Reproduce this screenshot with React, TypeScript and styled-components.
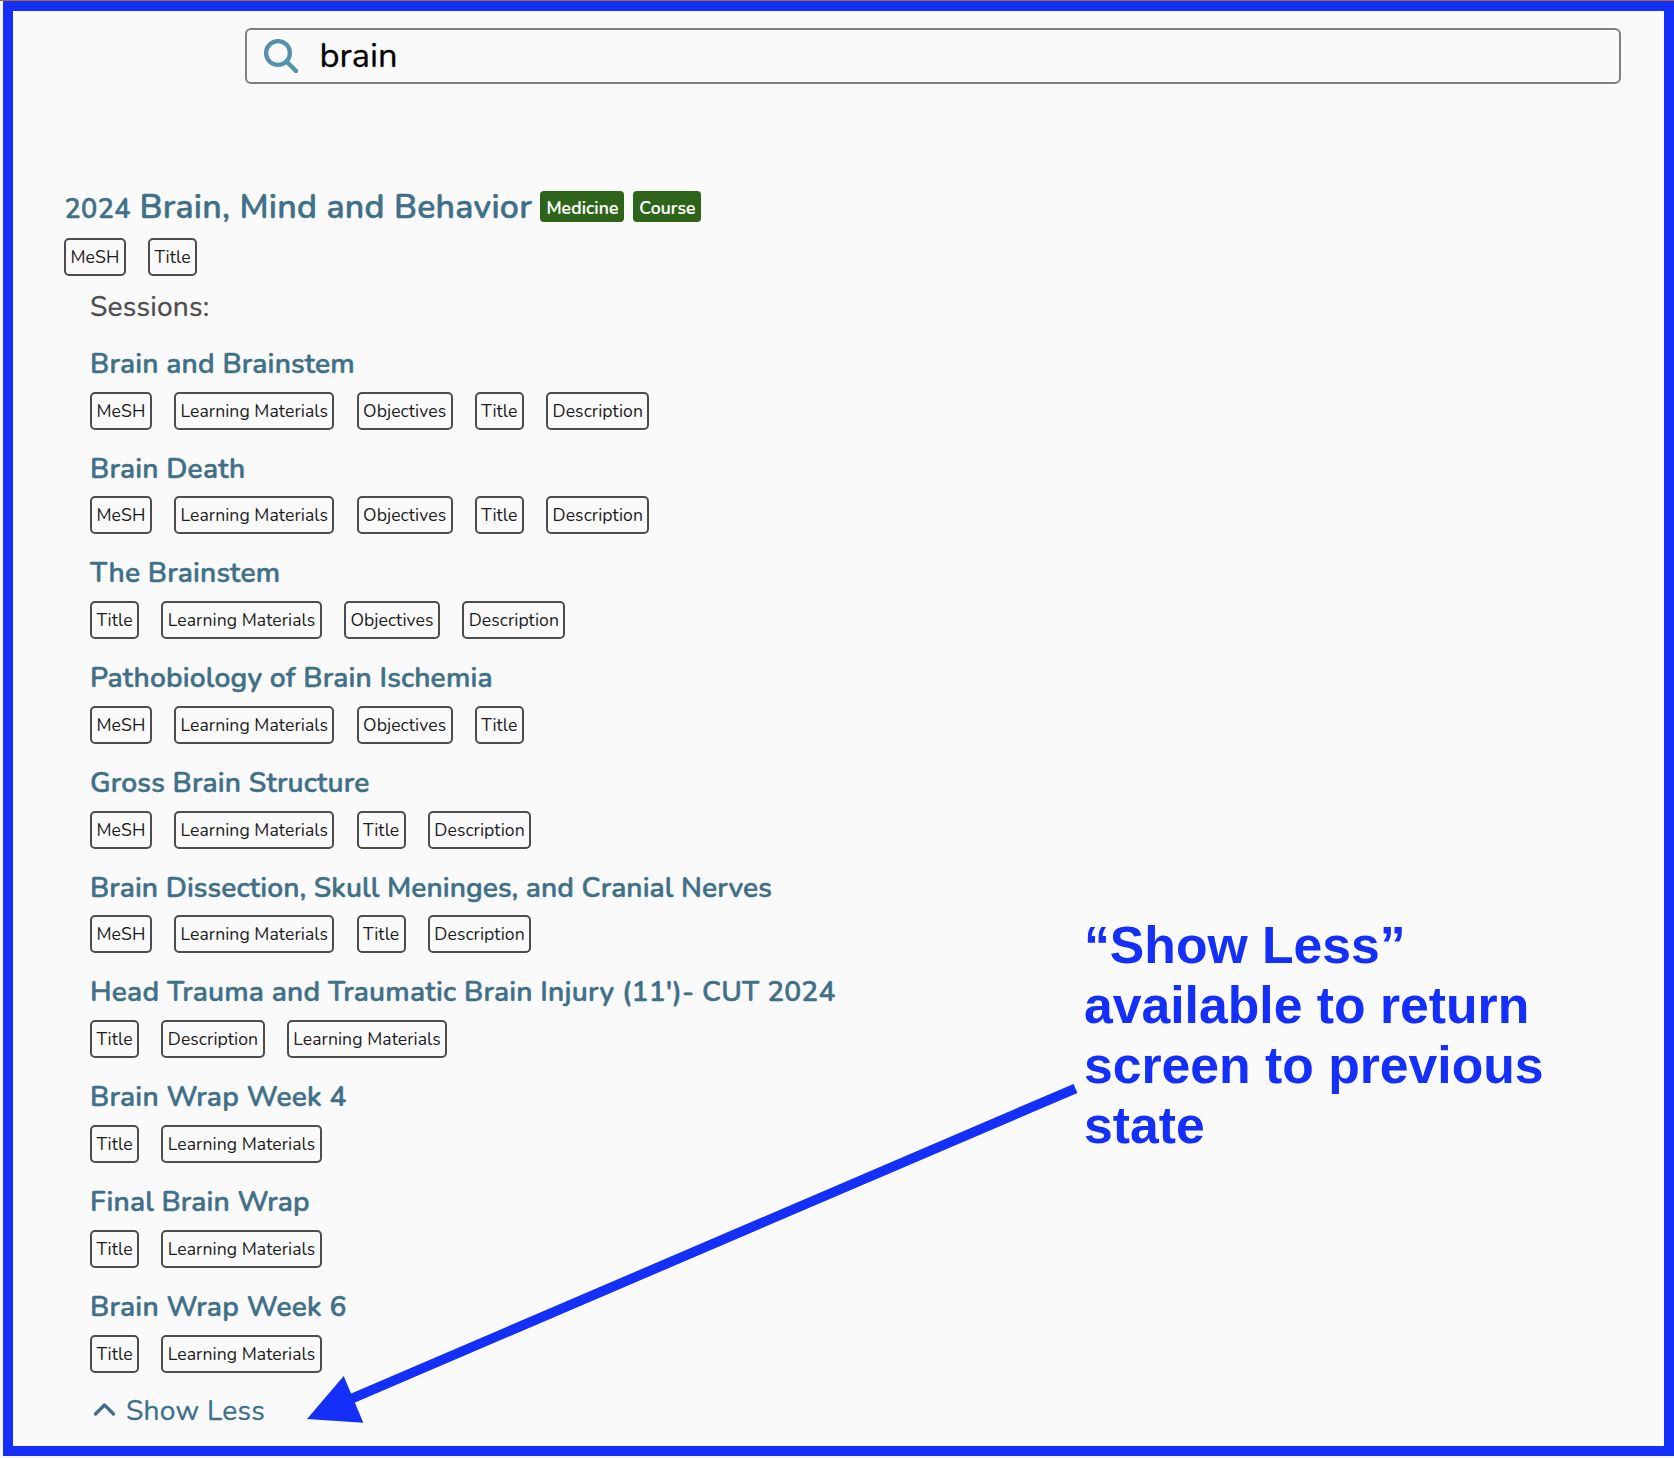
import React from "react";
import styled, { createGlobalStyle } from "styled-components";

const BLUE = "#142ff8";
const TEAL = "#407088";

const GlobalStyle = createGlobalStyle`
  *, *::before, *::after { box-sizing: border-box; }
  body {
    margin: 0;
    background: #f4f5ff;
    font-family: Nunito, Lato, "Open Sans", sans-serif;
    overflow: hidden;
  }
`;

const Page = styled.div`
  position: relative;
  width: 1674px;
  height: 1458px;
  border-top: 1px solid #b0672c;
  padding-left: 3px;
`;

const Frame = styled.main`
  height: 1455px;
  border: 10px solid ${BLUE};
  background: #fafafa;
  padding-top: 17px;
`;

const SearchBox = styled.div`
  display: flex;
  align-items: center;
  height: 56px;
  margin: 0 43px 0 232px;
  padding-left: 17px;
  border: 2px solid #808080;
  border-radius: 6px;
`;

const SearchText = styled.span`
  margin-left: 21.5px;
  font-size: 34.4px;
  line-height: 48px;
  color: #000;
  -webkit-text-stroke: 0.3px currentColor;
`;

const Course = styled.section`
  padding: 99.6px 0 0 51px;
`;

const CourseHeader = styled.header`
  display: flex;
  height: 46px;
  margin-bottom: 8.2px;
`;

const CourseTitle = styled.h2`
  display: flex;
  align-items: baseline;
  gap: 8.5px;
  margin: 0;
  padding-left: 0.5px;
  font-size: 33.8px;
  line-height: 46px;
  font-weight: 600;
  letter-spacing: 0.25px;
  color: ${TEAL};
  white-space: nowrap;
  -webkit-text-stroke: 0.5px currentColor;
`;

const Year = styled.span`
  font-size: 27.04px;
  letter-spacing: 0.4px;
`;

const Badges = styled.div`
  display: flex;
  gap: 9px;
  margin: 7.4px 0 0 8.4px;
`;

const Badge = styled.span<{ $width: number }>`
  width: ${(p) => p.$width}px;
  height: 31px;
  padding-top: 3px;
  border-radius: 4px;
  background: #2d6419;
  color: #fff;
  font-size: 17.6px;
  line-height: 28px;
  font-weight: 600;
  letter-spacing: 0.1px;
  text-align: center;
  -webkit-text-stroke: 0.2px currentColor;
`;

const Tags = styled.div`
  display: flex;
  gap: 22.1px;
`;

const Tag = styled.span`
  height: 38px;
  padding: 0 4.5px;
  border: 2px solid #4d4d4d;
  border-radius: 5px;
  color: #1c1c1c;
  font-size: 17.6px;
  line-height: 34px;
  letter-spacing: 0.06px;
  white-space: nowrap;
`;

const Sessions = styled.div`
  margin-left: 26px;
  padding-top: 12px;
`;

const SessionsLabel = styled.div`
  margin-bottom: 19px;
  font-size: 28.16px;
  line-height: 38px;
  letter-spacing: 0.2px;
  color: #4c4c4c;
  -webkit-text-stroke: 0.3px currentColor;
`;

const Session = styled.article`
  height: 104.77px;
`;

const SessionTitle = styled.h3<{ $spacing?: number }>`
  margin: 0 0 8.87px;
  font-size: 28.16px;
  line-height: 38px;
  font-weight: 600;
  letter-spacing: ${(p) => p.$spacing ?? 0.18}px;
  color: ${TEAL};
  white-space: nowrap;
  -webkit-text-stroke: 0.5px currentColor;
`;

const ShowLess = styled.button`
  display: flex;
  align-items: center;
  gap: 10px;
  padding: 0 0 0 3px;
  border: 0;
  background: none;
  font: inherit;
  font-size: 28.16px;
  line-height: 38px;
  letter-spacing: 0.25px;
  color: ${TEAL};
  -webkit-text-stroke: 0.3px currentColor;
`;

const Chevron = styled.svg`
  margin-bottom: 4px;
`;

const Annotation = styled.p`
  position: absolute;
  left: 1084px;
  top: 914px;
  margin: 0;
  font-family: "Liberation Sans", Arial, sans-serif;
  font-size: 51.7px;
  line-height: 60.1px;
  font-weight: 700;
  color: ${BLUE};
  white-space: nowrap;
`;

const Arrow = styled.svg`
  position: absolute;
  left: 300px;
  top: 1069px;
`;

const MESH = "MeSH";
const MATERIALS = "Learning Materials";
const OBJECTIVES = "Objectives";
const TITLE = "Title";
const DESCRIPTION = "Description";

const sessions: { title: string; tags: string[]; spacing?: number }[] = [
  { title: "Brain and Brainstem", tags: [MESH, MATERIALS, OBJECTIVES, TITLE, DESCRIPTION] },
  { title: "Brain Death", tags: [MESH, MATERIALS, OBJECTIVES, TITLE, DESCRIPTION] },
  { title: "The Brainstem", tags: [TITLE, MATERIALS, OBJECTIVES, DESCRIPTION] },
  {
    title: "Pathobiology of Brain Ischemia",
    tags: [MESH, MATERIALS, OBJECTIVES, TITLE],
    spacing: 0.16,
  },
  { title: "Gross Brain Structure", tags: [MESH, MATERIALS, TITLE, DESCRIPTION] },
  {
    title: "Brain Dissection, Skull Meninges, and Cranial Nerves",
    tags: [MESH, MATERIALS, TITLE, DESCRIPTION],
    spacing: 0.08,
  },
  {
    title: "Head Trauma and Traumatic Brain Injury (11')- CUT 2024",
    tags: [TITLE, DESCRIPTION, MATERIALS],
    spacing: 0.2,
  },
  { title: "Brain Wrap Week 4", tags: [TITLE, MATERIALS], spacing: 0.22 },
  { title: "Final Brain Wrap", tags: [TITLE, MATERIALS], spacing: 0.14 },
  { title: "Brain Wrap Week 6", tags: [TITLE, MATERIALS], spacing: 0.22 },
];

function TagList({ tags }: { tags: string[] }) {
  return (
    <Tags>
      {tags.map((tag) => (
        <Tag key={tag}>{tag}</Tag>
      ))}
    </Tags>
  );
}

export default function App() {
  return (
    <>
      <GlobalStyle />
      <Page>
        <Frame>
          <SearchBox>
            <svg width="34" height="34" viewBox="0 0 34 34" fill="none" stroke="#5391ad">
              <circle cx="14" cy="14" r="11.9" strokeWidth="4.3" />
              <path d="M22.5 22.5 L32 32" strokeWidth="4.4" strokeLinecap="round" />
            </svg>
            <SearchText>brain</SearchText>
          </SearchBox>
          <Course>
            <CourseHeader>
              <CourseTitle>
                <Year>2024</Year>
                <span>Brain, Mind and Behavior</span>
              </CourseTitle>
              <Badges>
                <Badge $width={84}>Medicine</Badge>
                <Badge $width={68}>Course</Badge>
              </Badges>
            </CourseHeader>
            <TagList tags={[MESH, TITLE]} />
            <Sessions>
              <SessionsLabel>Sessions:</SessionsLabel>
              {sessions.map((s) => (
                <Session key={s.title}>
                  <SessionTitle $spacing={s.spacing}>{s.title}</SessionTitle>
                  <TagList tags={s.tags} />
                </Session>
              ))}
              <ShowLess>
                <Chevron width="23" height="15" viewBox="0 0 23 15" fill="none" stroke={TEAL}>
                  <path
                    d="M2.5 12 L11.5 3 L20.5 12"
                    strokeWidth="3.4"
                    strokeLinecap="round"
                    strokeLinejoin="round"
                  />
                </Chevron>
                Show Less
              </ShowLess>
            </Sessions>
          </Course>
        </Frame>
        <Annotation>
          “Show Less”
          <br />
          available to return
          <br />
          screen to previous
          <br />
          state
        </Annotation>
        <Arrow width="790" height="370" viewBox="300 1070 790 370" fill={BLUE}>
          <path d="M1075.5 1088.4 L345 1401.5" stroke={BLUE} strokeWidth="9.8" />
          <polygon points="307,1419 343.7,1376 363.3,1422.7" />
        </Arrow>
      </Page>
    </>
  );
}
